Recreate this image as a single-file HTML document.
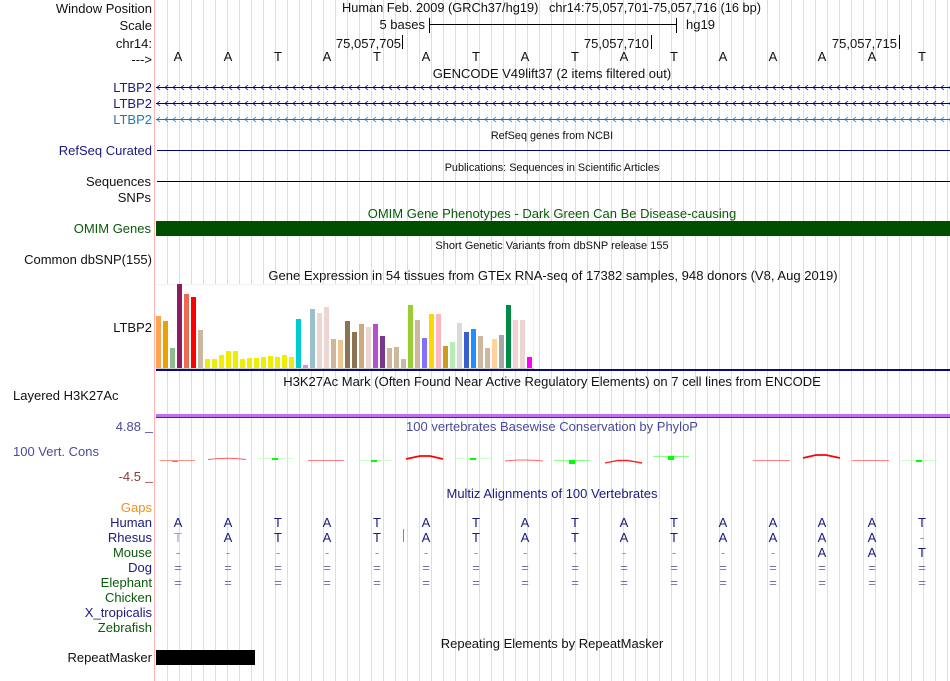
<!DOCTYPE html>
<html><head><meta charset="utf-8"><style>
html,body{margin:0;padding:0;background:#fff;width:950px;height:681px;overflow:hidden}
svg{display:block}
text{font-family:"Liberation Sans",sans-serif;font-size:13px;fill:#111}
.e{text-anchor:end}.m{text-anchor:middle}
.n{fill:#1a1a80}.g{fill:#0a5a0a}.s{font-size:10.85px}
</style></head><body>
<svg id="s" width="950" height="681" xmlns="http://www.w3.org/2000/svg" shape-rendering="crispEdges">
<g stroke="#dadaf6" stroke-width="1" id="grid">
<path d="M167.5 0V681M179.5 0V681M191.5 0V681M203.5 0V681M215.5 0V681M227.5 0V681M239.5 0V681M251.5 0V681M263.5 0V681M275.5 0V681M287.5 0V681M299.5 0V681M311.5 0V681M323.5 0V681M335.5 0V681M347.5 0V681M359.5 0V681M371.5 0V681M383.5 0V681M395.5 0V681M407.5 0V681M419.5 0V681M431.5 0V681M443.5 0V681M455.5 0V681M467.5 0V681M479.5 0V681M491.5 0V681M503.5 0V681M515.5 0V681M527.5 0V681M539.5 0V681M551.5 0V681M563.5 0V681M575.5 0V681M587.5 0V681M599.5 0V681M611.5 0V681M623.5 0V681M635.5 0V681M647.5 0V681M659.5 0V681M671.5 0V681M683.5 0V681M695.5 0V681M707.5 0V681M719.5 0V681M731.5 0V681M743.5 0V681M755.5 0V681M767.5 0V681M779.5 0V681M791.5 0V681M803.5 0V681M815.5 0V681M827.5 0V681M839.5 0V681M851.5 0V681M863.5 0V681M875.5 0V681M887.5 0V681M899.5 0V681M911.5 0V681M923.5 0V681M935.5 0V681M947.5 0V681"/>
</g>
<rect x="154" y="0" width="1" height="681" fill="#ffb0b0"/>

<!-- header labels -->
<text class="e" x="152" y="13">Window Position</text>
<text class="e" x="152" y="30">Scale</text>
<text class="e" x="152" y="48">chr14:</text>
<text class="e" x="152" y="64">---&gt;</text>
<text x="342" y="12" style="font-size:12.8px">Human Feb. 2009 (GRCh37/hg19)&#160;&#160;&#160;chr14:75,057,701-75,057,716 (16 bp)</text>
<text class="e" x="425" y="29">5 bases</text>
<text x="686" y="29">hg19</text>
<path d="M430 24.5H676M429.5 18V33M676.5 18V33" stroke="#000" fill="none"/>
<text class="e" x="401" y="48">75,057,705</text>
<text class="e" x="649" y="48">75,057,710</text>
<text class="e" x="897" y="48">75,057,715</text>
<path d="M402.5 35V49M651.5 35V49M899.5 35V49" stroke="#000" fill="none"/>
<g class="m" text-anchor="middle">
<text x="178" y="61">A</text><text x="228" y="61">A</text><text x="278" y="61">T</text><text x="327" y="61">A</text><text x="377" y="61">T</text><text x="426" y="61">A</text><text x="476" y="61">T</text><text x="525" y="61">A</text><text x="575" y="61">T</text><text x="624" y="61">A</text><text x="674" y="61">T</text><text x="723" y="61">A</text><text x="773" y="61">A</text><text x="822" y="61">A</text><text x="872" y="61">A</text><text x="922" y="61">T</text>
</g>

<text class="m" x="552" y="78">GENCODE V49lift37 (2 items filtered out)</text>
<text class="e n" x="152" y="92">LTBP2</text>
<text class="e n" x="152" y="108">LTBP2</text>
<text class="e" x="152" y="124" style="fill:#1f78b4">LTBP2</text>
<g fill="none" stroke-width="1">
<path id="a1" stroke="#000080" d="M156 87.5H950"/>
<path stroke="#000080" d="M156 103.5H950"/>
<path stroke="#1f6fae" d="M156 119.5H950"/>
</g>
<g id="arrows" fill="none" stroke-width="0.8" shape-rendering="auto"></g>

<text class="m s" x="552" y="139">RefSeq genes from NCBI</text>
<text class="e n" x="152" y="155">RefSeq Curated</text>
<rect x="157" y="150" width="793" height="1" fill="#000080"/>
<text class="m s" x="552" y="171">Publications: Sequences in Scientific Articles</text>
<text class="e" x="151" y="186">Sequences</text>
<rect x="157" y="181" width="793" height="1" fill="#000"/>
<text class="e" x="151" y="202">SNPs</text>
<text class="m g" x="552" y="218">OMIM Gene Phenotypes - Dark Green Can Be Disease-causing</text>
<text class="e g" x="151" y="233">OMIM Genes</text>
<rect x="156" y="221" width="794" height="15" fill="#004f00"/>
<text class="m" style="font-size:11px" x="552" y="249">Short Genetic Variants from dbSNP release 155</text>
<text class="e" x="152" y="264">Common dbSNP(155)</text>
<text class="m" x="553" y="280" style="font-size:13.05px">Gene Expression in 54 tissues from GTEx RNA-seq of 17382 samples, 948 donors (V8, Aug 2019)</text>
<text class="e" x="152" y="332">LTBP2</text>

<!-- GTEx -->
<rect x="156" y="284" width="377" height="85" fill="#fff"/>
<rect x="156" y="284" width="377" height="1" fill="#f0f0f8"/>
<rect x="533" y="284" width="1" height="85" fill="#f0f0f8"/>
<g id="bars"></g>
<rect x="156" y="368" width="378" height="1" fill="#ccc"/>
<rect x="156" y="369" width="794" height="2" fill="#0a0a78"/>

<text class="m" x="552" y="386">H3K27Ac Mark (Often Found Near Active Regulatory Elements) on 7 cell lines from ENCODE</text>
<text x="13" y="400">Layered H3K27Ac</text>
<rect x="156" y="414" width="794" height="3" fill="#c070f0"/>
<rect x="156" y="417" width="794" height="1" fill="#3a2aa0"/>

<!-- PhyloP -->
<text class="m" x="552" y="431" style="fill:#4a4a9a">100 vertebrates Basewise Conservation by PhyloP</text>
<text class="e" x="141" y="431" style="fill:#4a4a9a">4.88</text>
<rect x="145" y="432" width="8" height="1" fill="#6a6aaa"/>
<text x="13" y="456" style="fill:#4a4a9a">100 Vert. Cons</text>
<text class="e" x="141" y="481" style="fill:#8a3a3a">-4.5</text>
<rect x="145" y="482" width="8" height="1" fill="#aa6a6a"/>
<g shape-rendering="auto" fill="none">
<path d="M158 460.5H195" stroke="#ccffcc"/><path d="M160 460.5H195" stroke="#ff7070" stroke-width=".8"/>
<rect x="172" y="461" width="6" height="1" fill="#0f0"/>
<path d="M208 459.5 Q228 457 246 459.5" stroke="#f55" stroke-width="1"/>
<path d="M257 458.5H293" stroke="#ccffcc"/><rect x="272" y="458" width="6" height="2" fill="#0f0"/>
<path d="M308 460.5H344" stroke="#ff8080"/>
<path d="M357 460.5H392" stroke="#ccffcc"/><rect x="371" y="460" width="6" height="2" fill="#0f0"/>
<path d="M406 459 L420 456 H430 L443 459" stroke="#f00" stroke-width="1.8"/>
<path d="M456 458.5H491" stroke="#ccffcc"/><rect x="470" y="458" width="6" height="2" fill="#0f0"/>
<path d="M505 461 Q525 459 543 461" stroke="#f66"/>
<path d="M554 460.5H590" stroke="#88ff88"/><rect x="569" y="460" width="6" height="4" fill="#0f0"/>
<path d="M605 463 L618 460.5 H628 L642 463" stroke="#f22" stroke-width="1.4"/>
<path d="M653 456.5H689" stroke="#88ff88"/><rect x="668" y="456" width="6" height="4" fill="#0f0"/>
<path d="M753 460.5H790" stroke="#ff8080"/>
<path d="M803 458 L816 455 H826 L840 458" stroke="#f00" stroke-width="1.8"/>
<path d="M852 460.5H889" stroke="#ff8080"/>
<path d="M901 460.5H937" stroke="#ccffcc"/><rect x="916" y="460" width="6" height="2" fill="#0f0"/>
</g>

<text class="e" x="152" y="512" style="fill:#ee9020">Gaps</text>
<text class="m n" x="552" y="498">Multiz Alignments of 100 Vertebrates</text>
<text class="e n" x="152" y="527">Human</text>
<text class="e n" x="152" y="542">Rhesus</text>
<text class="e g" x="152" y="557">Mouse</text>
<text class="e n" x="152" y="572">Dog</text>
<text class="e g" x="152" y="587">Elephant</text>
<text class="e g" x="152" y="602">Chicken</text>
<text class="e n" x="152" y="617">X_tropicalis</text>
<text class="e g" x="152" y="632">Zebrafish</text>
<g id="maf" text-anchor="middle"></g>
<rect x="403" y="529" width="1" height="13" fill="#c87a20"/>

<text class="m" x="552" y="648">Repeating Elements by RepeatMasker</text>
<text class="e" x="152" y="662">RepeatMasker</text>
<rect x="156" y="650" width="99" height="15" fill="#000"/>
</svg>
<script>
var NS="http://www.w3.org/2000/svg";
function mk(t,a,p,txt){var e=document.createElementNS(NS,t);for(var k in a)e.setAttribute(k,a[k]);if(txt)e.textContent=txt;p.appendChild(e);return e}
var d=[[108,"#ffa54f"],[123,"#eea000"],[204,"#8fbc8f"],[12,"#8b1c62"],[42,"#ee6a50"],[51,"#ff0000"],[150,"#cdb79e"],[237,"#eeee00"],[237,"#eeee00"],[225,"#eeee00"],[213,"#eeee00"],[213,"#eeee00"],[237,"#eeee00"],[234,"#eeee00"],[234,"#eeee00"],[231,"#eeee00"],[228,"#eeee00"],[231,"#eeee00"],[225,"#eeee00"],[231,"#eeee00"],[117,"#00cdcd"],[255,"#ee82ee"],[87,"#9ac0cd"],[99,"#eed5d2"],[81,"#eed5d2"],[177,"#cdb79e"],[180,"#eec591"],[123,"#8b7355"],[156,"#8b7355"],[132,"#cdaa7d"],[141,"#eed5d2"],[132,"#b452cd"],[168,"#7a378b"],[204,"#cdb79e"],[201,"#cdb79e"],[237,"#cdb79e"],[75,"#9acd32"],[120,"#cdb79e"],[174,"#8470ff"],[102,"#ffd700"],[102,"#ffb6c1"],[198,"#cd9b1d"],[186,"#b4eeb4"],[129,"#d9d9d9"],[156,"#3a5fcd"],[147,"#1e90ff"],[168,"#cdb79e"],[204,"#cdb79e"],[177,"#ffd39b"],[165,"#a6a6a6"],[75,"#008b45"],[120,"#eed5d2"],[120,"#eed5d2"],[231,"#ff00ff"]];
var b=document.getElementById("bars");
d.forEach(function(v,i){var y=280+v[0]/3;mk("rect",{x:156+7*i,y:y,width:5,height:368-y,fill:v[1]},b)});
var ar=document.getElementById("arrows"),p1="",p2="";
for(var x=157;x<950;x+=8){p1+="M"+(x+3)+" 85L"+x+" 87.5L"+(x+3)+" 90M"+(x+3)+" 101L"+x+" 103.5L"+(x+3)+" 106";p2+="M"+(x+3)+" 117L"+x+" 119.5L"+(x+3)+" 122"}
mk("path",{d:p1,stroke:"#000080"},ar);mk("path",{d:p2,stroke:"#1f6fae"},ar);
var xs=[178,228,278,327,377,426,476,525,575,624,674,723,773,822,872,922];
var hu="AATATATATATAAAAT",rh="TATATATATATAAAA-",mo="-------------AAT";
var m=document.getElementById("maf");
function lt(x,y,c,f){var e=mk("text",{x:x,y:y},m,c);e.style.fill=f}
xs.forEach(function(x,i){
lt(x,527,hu[i],"#1a1a80");
lt(x,542,rh[i],i==0?"#a0a0c8":(rh[i]=="-"?"#9090b8":"#1a1a80"));
lt(x,557,mo[i],mo[i]=="-"?"#9090b8":"#1a1a80");
lt(x,572,"=","#7070a8");
lt(x,587,"=","#7070a8");
});
</script>
</body></html>
